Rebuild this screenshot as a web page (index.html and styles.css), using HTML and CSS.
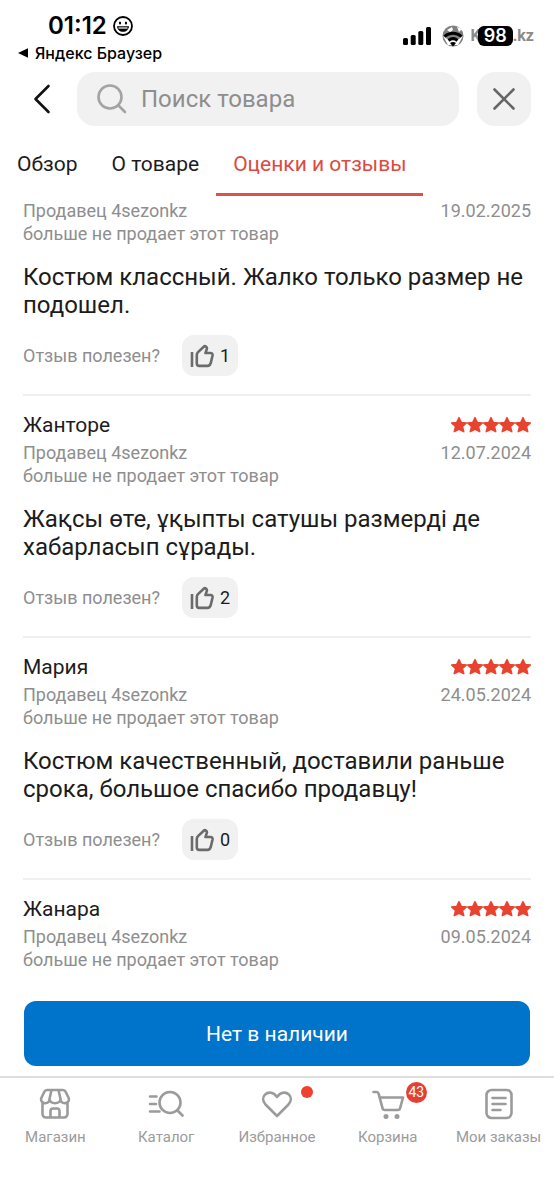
FILE: index.html
```html
<!DOCTYPE html>
<html lang="ru">
<head>
<meta charset="utf-8">
<meta name="viewport" content="width=device-width, initial-scale=1">
<title>Оценки и отзывы</title>
<link rel="stylesheet" href="styles.css">
</head>
<body>
<svg class="defs" aria-hidden="true">
  <symbol id="star" viewBox="0 0 18 18"><path d="M9 1.600l2.300 4.800 5.100.6-3.900 3.500 1.300 5.200L9 13.300l-4.800 2.400 1.300-5.200L1.600 7l5.100-.6z" fill="currentColor" stroke="currentColor" stroke-width="1.400" stroke-linejoin="round"/></symbol>
  <symbol id="stars" viewBox="0 0 80 18">
    <use href="#star" x="-1" width="18" height="18"/><use href="#star" x="15" width="18" height="18"/><use href="#star" x="31" width="18" height="18"/><use href="#star" x="47" width="18" height="18"/><use href="#star" x="63" width="18" height="18"/>
  </symbol>
  <symbol id="thumb" viewBox="0 0 24 24"><g fill="none" stroke="currentColor" stroke-width="2.600" stroke-linejoin="round"><path d="M2 8v15"/><path d="M6.800 19.500V11c0-1.300.3-2 1.200-2.900l6-5.600c1-.9 3.300.6 2.900 2.200L15.500 9h5c1.600 0 2.300 1.100 2 2.600l-1.800 7.600c-.5 1.800-1.500 2.700-3.200 2.700H9.200c-1.500 0-2.400-.9-2.400-2.400z"/></g></symbol>
</svg>
<div class="app">
  <header class="status">
    <div class="status-left">
      <div class="clock">01:12
        <svg width="20" height="20" viewBox="0 0 20 20" fill="none" stroke="#000"><circle cx="10" cy="10" r="9" stroke-width="1.800"/><ellipse cx="7" cy="7" rx="1.100" ry="1.500" fill="#000" stroke="none"/><ellipse cx="13" cy="7" rx="1.100" ry="1.500" fill="#000" stroke="none"/><path d="M4 10.300h12c-.3 3.500-2.700 5.500-6 5.500s-5.700-2-6-5.500z" fill="#000" stroke="none"/><path d="M5.500 12h9" stroke="#fff" stroke-width="1.200"/></svg>
      </div>
      <a class="return" href="#"><svg width="11" height="10" viewBox="0 0 11 10"><path d="M0 5L10 .3v9.400z"/></svg>Яндекс Браузер</a>
    </div>
    <div class="status-right">
      <svg class="signal" width="28" height="18" viewBox="0 0 28 18"><rect x="0" y="11" width="5" height="7" rx="1.500"/><rect x="7.700" y="8" width="5" height="10" rx="1.500"/><rect x="15.300" y="4" width="5" height="14" rx="1.500"/><rect x="23" y="0" width="5" height="18" rx="1.500"/></svg>
      <svg class="wifi" width="24" height="24" viewBox="0 0 24 24"><circle cx="12" cy="12" r="10.500" fill="#808080"/><path d="M6 6l5-3 1 3-3 2zM16 3l5 2-3 3z" fill="#fff"/><path d="M2 12l5 9h10l5-9-4 3H6z" fill="#fff"/><g fill="none" stroke="#000" stroke-width="3"><path d="M3.500 12.500c5-4.500 12-4.500 17 0"/><path d="M7.500 16.500c2.800-2.300 6.200-2.300 9 0"/></g><path d="M9 19c2-1.300 4-1.300 6 0l-3 3.500z"/></svg>
      <div class="brand"><span>K</span><span class="battery">98</span><span>.kz</span></div>
    </div>
  </header>
  <div class="searchbar">
    <button class="back" aria-label="Назад"><svg width="18" height="30" viewBox="0 0 18 30" fill="none" stroke="#111" stroke-width="2.600" stroke-linecap="round" stroke-linejoin="round"><path d="M15.500 2L2.500 15l13 13"/></svg></button>
    <label class="search">
      <svg width="30" height="30" viewBox="0 0 30 30" fill="none" stroke="#a3a3a3" stroke-width="2.600" stroke-linecap="round"><circle cx="13" cy="13" r="11.500"/><path d="M21.500 21.500L28 28"/></svg>
      <input type="text" placeholder="Поиск товара" aria-label="Поиск товара">
    </label>
    <button class="close" aria-label="Закрыть"><svg width="22" height="22" viewBox="0 0 22 22" fill="none" stroke="#666" stroke-width="2.600" stroke-linecap="round"><path d="M1.500 1.500l19 19M20.500 1.500l-19 19"/></svg></button>
  </div>
  <nav class="tabs">
    <a href="#">Обзор</a><a href="#">О товаре</a><a class="active" href="#">Оценки и отзывы</a>
  </nav>
  <main class="reviews">
    <article class="review">
      <div class="meta"><p>Продавец 4sezonkz<br>больше не продает этот товар</p><time>19.02.2025</time></div>
      <p class="text">Костюм классный. Жалко только размер не подошел.</p>
      <div class="useful"><span>Отзыв полезен?</span><button class="like" aria-label="Полезно, 1"><svg width="24" height="24"><use href="#thumb"/></svg>1</button></div>
    </article>
    <article class="review">
      <div class="author"><h2>Жанторе</h2><svg class="stars" width="80" height="18" role="img" aria-label="5 из 5"><use href="#stars"/></svg></div>
      <div class="meta"><p>Продавец 4sezonkz<br>больше не продает этот товар</p><time>12.07.2024</time></div>
      <p class="text">Жақсы өте, ұқыпты сатушы размерді де хабарласып сұрады.</p>
      <div class="useful"><span>Отзыв полезен?</span><button class="like" aria-label="Полезно, 2"><svg width="24" height="24"><use href="#thumb"/></svg>2</button></div>
    </article>
    <article class="review">
      <div class="author"><h2>Мария</h2><svg class="stars" width="80" height="18" role="img" aria-label="5 из 5"><use href="#stars"/></svg></div>
      <div class="meta"><p>Продавец 4sezonkz<br>больше не продает этот товар</p><time>24.05.2024</time></div>
      <p class="text">Костюм качественный, доставили раньше срока, большое спасибо продавцу!</p>
      <div class="useful"><span>Отзыв полезен?</span><button class="like" aria-label="Полезно, 0"><svg width="24" height="24"><use href="#thumb"/></svg>0</button></div>
    </article>
    <article class="review">
      <div class="author"><h2>Жанара</h2><svg class="stars" width="80" height="18" role="img" aria-label="5 из 5"><use href="#stars"/></svg></div>
      <div class="meta"><p>Продавец 4sezonkz<br>больше не продает этот товар</p><time>09.05.2024</time></div>
    </article>
  </main>
  <div class="buy"><button>Нет в наличии</button></div>
  <nav class="bottom">
    <a href="#"><span class="icon"><svg width="32" height="32" viewBox="0 0 32 32"><path d="M3.500 15v11a3.500 3.500 0 0 0 3.500 3.500h18a3.500 3.500 0 0 0 3.500-3.500V15M8.500 2h15c1.600 0 2.700.7 3.400 2.200l3 6.300c.4 3-1.600 4.700-4 4.700-2.600 0-4.300-1.700-4.400-4.200 0 2.500-2.300 4.200-5.500 4.200s-5.500-1.700-5.500-4.200c-.1 2.500-1.800 4.200-4.400 4.200-2.400 0-4.400-1.700-4-4.700l3-6.300C5.800 2.700 6.900 2 8.500 2zM12.500 2l-2 9M19.500 2l2 9M11.500 29v-6a2.500 2.500 0 0 1 2.500-2.500h4a2.500 2.500 0 0 1 2.500 2.500v6"/></svg></span>Магазин</a>
    <a href="#"><span class="icon"><svg width="36" height="32" viewBox="0 0 36 32"><circle cx="22" cy="14.500" r="10.500"/><path d="M29.500 22.500l5 5M2 8.500h6.500M2 16h6M2 23.500h9.500"/></svg></span>Каталог</a>
    <a href="#"><span class="icon"><svg width="32" height="32" viewBox="0 0 32 32"><path d="M16 28L4.500 16.500c-3-3.300-3-7.300-.5-9.800 3.200-3.200 8.700-2.700 12 2.300 3.300-5 8.800-5.500 12-2.300 2.500 2.500 2.500 6.500-.5 9.800z"/></svg><span class="dot"></span></span>Избранное</a>
    <a href="#"><span class="icon"><svg width="34" height="32" viewBox="0 0 34 32"><path d="M2.500 4h3c1.200 0 1.800.5 2.100 1.600l3.900 14.600c.3 1.200 1 1.800 2.200 1.800h13.100c1.200 0 2-.6 2.300-1.800L32 9.500H8.800"/><g fill="#9b9b9b" stroke="none"><circle cx="15" cy="28.500" r="2.500"/><circle cx="26" cy="28.500" r="2.500"/></g></svg><span class="badge">43</span></span>Корзина</a>
    <a href="#"><span class="icon"><svg width="30" height="32" viewBox="0 0 30 32"><rect x="2.500" y="2" width="25" height="28" rx="5"/><path d="M8.500 10h13M8.500 16h13M8.500 22h8"/></svg></span>Мои заказы</a>
  </nav>
</div>
</body>
</html>
```
FILE: styles.css
```css
* { box-sizing: border-box; }
body { margin: 0; background: #fff; color: #1c1c1c; font-family: Roboto, "Noto Sans", sans-serif; }
h2, p { margin: 0; font-weight: 400; }
a { color: inherit; text-decoration: none; }
button { padding: 0; border: 0; background: none; font: inherit; color: inherit; }
svg { display: block; flex: none; }
.defs { position: absolute; width: 0; height: 0; }
.app { display: flex; flex-direction: column; min-height: 100vh; }

.status { display: flex; justify-content: space-between; padding: 12px 20px 0 18px; color: #000; font-family: Inter, sans-serif; }
.clock { display: flex; align-items: center; gap: 6px; padding-left: 30px; font-size: 24px; line-height: 28px; font-weight: 600; }
.return { display: flex; align-items: center; gap: 6px; margin-top: 2px; font-size: 16px; line-height: 22px; font-weight: 500; }
.status-right { display: flex; align-items: center; height: 48px; }
.signal { margin-right: 10px; }
.wifi { margin-right: 6px; }
.brand { display: flex; align-items: center; color: #8a8a8a; font-family: Roboto, sans-serif; font-weight: 700; font-size: 16px; line-height: 20px; }
.battery { width: 35px; margin-left: -3px; border-radius: 6px; background: #000; color: #fff; font: 600 18px/20px Inter, sans-serif; text-align: center; }

.searchbar { display: flex; align-items: center; gap: 18px; padding: 8px 23px 0 24px; }
.back { display: flex; justify-content: center; width: 35px; height: 54px; align-items: center; }
.search { display: flex; flex: 1; align-items: center; gap: 14px; min-width: 0; height: 54px; padding: 0 20px; border-radius: 18px; background: #f1f1f1; }
.search input { flex: 1; min-width: 0; padding: 0; border: 0; outline: 0; background: none; font: 24px/30px Roboto, sans-serif; color: #1c1c1c; }
.search input::placeholder { color: #8e8e8e; opacity: 1; }
.close { display: flex; align-items: center; justify-content: center; width: 54px; height: 54px; border-radius: 18px; background: #f1f1f1; }

.tabs { display: flex; height: 70px; font-size: 21px; line-height: 28px; }
.tabs a { padding: 24px 17px 0; border-bottom: 3px solid transparent; }
.tabs .active { color: #dc4a40; border-color: #d9534c; }

.reviews { flex: 1; padding: 3px 23px 0; }
.review { padding: 16px 0 18px; }
.review:first-child { padding-top: 0; }
.review + .review { border-top: 2px solid #f0f0f0; }
.author { display: flex; align-items: center; justify-content: space-between; margin-bottom: 3px; }
.author h2 { font-size: 21px; line-height: 26px; }
.stars { color: #e8432f; }
.meta { display: flex; justify-content: space-between; color: #8e8e8e; font-size: 18px; line-height: 23px; }
.text { margin-top: 18px; font-size: 24px; line-height: 28px; }
.useful { display: flex; align-items: center; gap: 22px; margin-top: 16px; color: #8e8e8e; font-size: 18px; }
.like { display: flex; align-items: center; gap: 6px; height: 41px; padding: 0 8px; border-radius: 12px; background: #f1f1f1; color: #1c1c1c; }
.like svg { color: #6b6b6b; }

.buy { padding: 12px 24px 10px; }
.buy button { width: 100%; height: 65px; border-radius: 12px; background: #0073cb; color: #fff; font-size: 21px; }

.bottom { display: grid; grid-template-columns: repeat(5, 1fr); height: 124px; padding-top: 10px; border-top: 2px solid #dedede; color: #9b9b9b; font-size: 15px; line-height: 20px; }
.bottom a { display: flex; flex-direction: column; align-items: center; gap: 7px; height: 59px; white-space: nowrap; }
.icon { position: relative; }
.icon svg { fill: none; stroke: #9b9b9b; stroke-width: 2.6px; stroke-linecap: round; stroke-linejoin: round; }
.dot { position: absolute; top: -2px; right: -20px; width: 12px; height: 12px; border-radius: 50%; background: #ee412e; }
.badge { position: absolute; top: -6px; right: -22px; width: 21px; height: 21px; border-radius: 50%; background: #e43f32; color: #fff; font-size: 14px; line-height: 21px; text-align: center; }
```
